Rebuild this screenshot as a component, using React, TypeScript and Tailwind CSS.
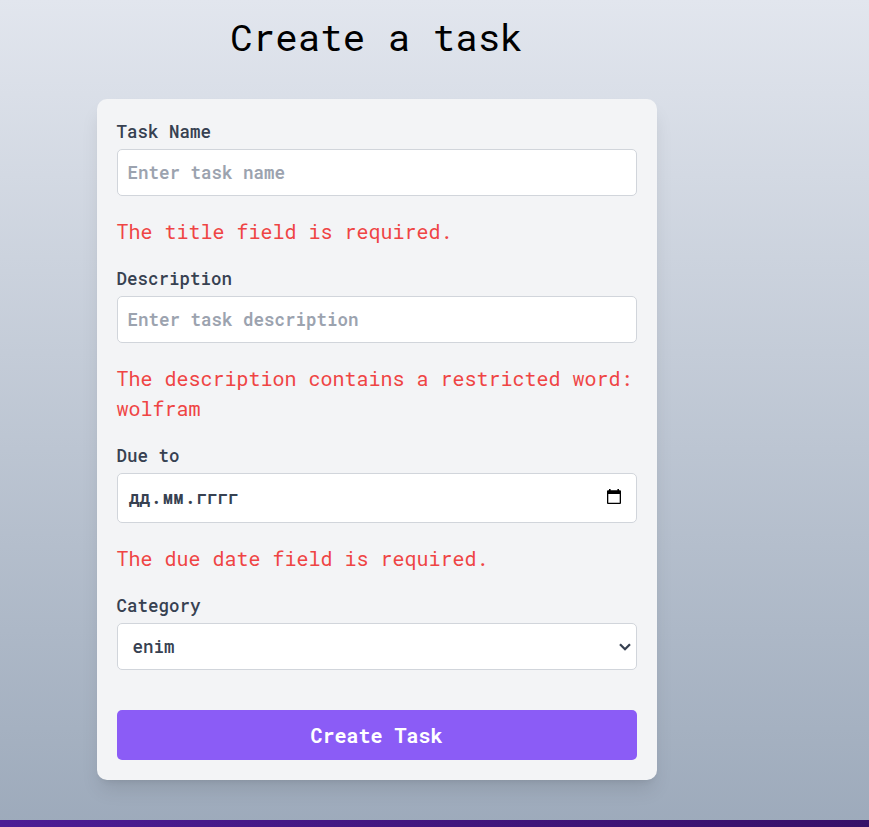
import type { ReactNode } from "react";

function Field({ label, children }: { label: string; children: ReactNode }) {
  return (
    <div>
      <label className="mb-[5px] block text-[17.5px] leading-[25px] font-medium text-[#374151]">{label}</label>
      {children}
    </div>
  );
}

function FieldError({ children }: { children: ReactNode }) {
  return <p className="my-5 text-[20px] leading-[30px] text-[#ef4444]">{children}</p>;
}

const control =
  "w-full rounded-[5px] border border-[#d1d5db] bg-white text-[17.5px] leading-[25px] text-[#374151]";

export default function App() {
  return (
    <div className="flex h-[827px] w-full flex-col overflow-hidden bg-linear-to-b from-[#e2e6ee] to-[#9daabb] font-['Roboto_Mono','Liberation_Mono',monospace]">
      <main className="ml-[96.5px] h-[820px] w-[560px] pt-[14px]">
        <h1 className="mb-10 text-center text-[37.5px] leading-[45px] text-black">Create a task</h1>
        <form className="rounded-[10px] bg-[#f3f4f6] p-5 shadow-[0_12.5px_18.75px_-3.75px_rgba(0,0,0,0.1),0_5px_7.5px_-5px_rgba(0,0,0,0.1)]">
          <Field label="Task Name">
            <input
              className={`${control} block h-[47px] px-[10px] font-semibold placeholder:text-[#9ca3af]`}
              placeholder="Enter task name"
            />
          </Field>
          <FieldError>The title field is required.</FieldError>
          <Field label="Description">
            <input
              className={`${control} block h-[47px] px-[10px] font-semibold placeholder:text-[#9ca3af]`}
              placeholder="Enter task description"
            />
          </Field>
          <FieldError>The description contains a restricted word: wolfram</FieldError>
          <Field label="Due to">
            <div className={`${control} flex h-[50px] items-center justify-between pr-[14.5px] pb-[2px] pl-[10px] font-semibold`}>
              <span className="flex">
                <span className="px-[1.25px]">дд</span>
                <span>.</span>
                <span className="px-[1.25px]">мм</span>
                <span>.</span>
                <span className="px-[1.25px]">гггг</span>
              </span>
              <svg className="mb-px h-[15px] w-[14px]" viewBox="0 0 14 15">
                <path
                  d="M2 0h1.6v1.2h6.8V0H12v1.2h1a1 1 0 0 1 1 1V14a1 1 0 0 1-1 1H1a1 1 0 0 1-1-1V2.2a1 1 0 0 1 1-1h1zM1.3 5v8.7h11.4V5z"
                  fill="#000"
                  fillRule="evenodd"
                />
              </svg>
            </div>
          </Field>
          <FieldError>The due date field is required.</FieldError>
          <Field label="Category">
            <div className={`${control} flex h-[47px] items-center justify-between pr-[5px] pl-[15px] font-medium`}>
              <span>enim</span>
              <svg className="h-[8px] w-[12px]" viewBox="0 0 12 8">
                <path d="M1 1.2 6 6.2 11 1.2" fill="none" stroke="#374151" strokeWidth="2.3" />
              </svg>
            </div>
          </Field>
          <button
            type="button"
            className="mt-10 block h-[50px] w-full rounded-[5px] bg-[#8b5cf6] text-[20px] leading-[30px] font-bold text-white"
          >
            Create Task
          </button>
        </form>
      </main>
      <footer className="h-[7px] w-full bg-linear-to-r from-[#4c1d95] to-[#371068]" />
    </div>
  );
}
